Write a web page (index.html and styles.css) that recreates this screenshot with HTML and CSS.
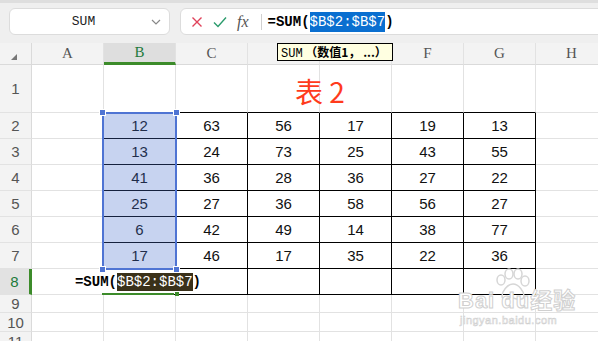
FILE: index.html
```html
<!DOCTYPE html>
<html lang="zh-CN">
<head>
    <meta charset="UTF-8">
    <title>SUM</title>
    <link rel="stylesheet" href="styles.css">
</head>
<body>

<div class="toolbar">
    <div class="namebox">
        <span class="name">SUM</span>
        <svg class="chev" width="10" height="6" viewBox="0 0 10 6"><path d="M1 1l4 4 4-4" fill="none" stroke="#888" stroke-width="1.2"/></svg>
    </div>
    <div class="fbar">
        <svg class="ico" width="12" height="12" viewBox="0 0 12 12"><path d="M1.5 1.5l9 9M10.5 1.5l-9 9" stroke="#e0425a" stroke-width="1.4"/></svg>
        <svg class="ico" width="14" height="12" viewBox="0 0 14 12"><path d="M1 6.5l4 4L13 1.5" fill="none" stroke="#2b9b6c" stroke-width="1.4"/></svg>
        <span class="fx">fx</span>
        <span class="sep"></span>
        <span class="ftext"><b>=SUM(</b><span class="hl">$B$2:$B$7</span><b>)</b></span>
    </div>
</div>

<div class="wrap">
    <div class="sheet">
        <div class="corner"><span class="tri"></span></div>
        <div class="ch">A</div><div class="ch on">B</div><div class="ch">C</div><div class="ch">D</div>
        <div class="ch">E</div><div class="ch">F</div><div class="ch">G</div><div class="ch">H</div>

        <div class="rh">1</div>
        <div class="c"></div><div class="c"></div><div class="c tb"></div><div class="c tb"></div>
        <div class="c tb"></div><div class="c tb"></div><div class="c tb"></div><div class="c"></div>

        <div class="rh">2</div>
        <div class="c"></div><div class="c t">12</div><div class="c t">63</div><div class="c t">56</div>
        <div class="c t">17</div><div class="c t">19</div><div class="c t">13</div><div class="c"></div>

        <div class="rh">3</div>
        <div class="c"></div><div class="c t">13</div><div class="c t">24</div><div class="c t">73</div>
        <div class="c t">25</div><div class="c t">43</div><div class="c t">55</div><div class="c"></div>

        <div class="rh">4</div>
        <div class="c"></div><div class="c t">41</div><div class="c t">36</div><div class="c t">28</div>
        <div class="c t">36</div><div class="c t">27</div><div class="c t">22</div><div class="c"></div>

        <div class="rh">5</div>
        <div class="c"></div><div class="c t">25</div><div class="c t">27</div><div class="c t">36</div>
        <div class="c t">58</div><div class="c t">56</div><div class="c t">27</div><div class="c"></div>

        <div class="rh">6</div>
        <div class="c"></div><div class="c t">6</div><div class="c t">42</div><div class="c t">49</div>
        <div class="c t">14</div><div class="c t">38</div><div class="c t">77</div><div class="c"></div>

        <div class="rh">7</div>
        <div class="c"></div><div class="c t">17</div><div class="c t">46</div><div class="c t">17</div>
        <div class="c t">35</div><div class="c t">22</div><div class="c t">36</div><div class="c"></div>

        <div class="rh on">8</div>
        <div class="c"></div><div class="c t"></div><div class="c t"></div><div class="c t"></div>
        <div class="c t"></div><div class="c t"></div><div class="c t"></div><div class="c"></div>

        <div class="rh">9</div>
        <div class="c"></div><div class="c"></div><div class="c"></div><div class="c"></div>
        <div class="c"></div><div class="c"></div><div class="c"></div><div class="c"></div>

        <div class="rh">10</div>
        <div class="c"></div><div class="c"></div><div class="c"></div><div class="c"></div>
        <div class="c"></div><div class="c"></div><div class="c"></div><div class="c"></div>

        <div class="rh">11</div>
        <div class="c"></div><div class="c"></div><div class="c"></div><div class="c"></div>
        <div class="c"></div><div class="c"></div><div class="c"></div><div class="c"></div>
    </div>

    <!-- overlay layer on the same grid template -->
    <div class="sheet layer">
        <div class="title">表 2</div>
        <div class="edit"><b>=SUM(</b><span class="ref">$B$2:$B$7</span><b>)</b></div>
        <div class="active"><span class="gh"></span></div>
        <div class="range">
            <span class="h tl"></span><span class="h tr"></span><span class="h bl"></span><span class="h br"></span>
        </div>
    </div>

    <div class="tip"><span class="fn">SUM</span> （数值1， ...）</div>
</div>

<div class="mark">
    <svg class="paw" width="40" height="34" viewBox="0 0 40 34">
        <g fill="none" stroke="#d6d6d6" stroke-width="1.5">
            <ellipse cx="9" cy="12" rx="4" ry="5"/>
            <ellipse cx="17" cy="6" rx="4" ry="5"/>
            <ellipse cx="26" cy="6" rx="4" ry="5"/>
            <ellipse cx="33" cy="13" rx="4" ry="5"/>
            <path d="M21 16c-6 0-11 8-11 12 0 4 5 4 11 2 6 2 11 2 11-2 0-4-5-12-11-12z"/>
        </g>
    </svg>
    <div class="brand">Bai<span class="du">du</span>经验</div>
    <div class="url">jingyan.baidu.com</div>
</div>

</body>
</html>
```

FILE: styles.css
```css
body {
    margin: 0;
    width: 598px;
    height: 341px;
    overflow: hidden;
    background: #fff;
    font-family: "Liberation Sans", Arial, sans-serif;
    position: relative;
}

.toolbar {
    height: 43px;
    background: #efefef;
    border-top: 3px solid #dedede;
    display: flex;
    padding: 5px 0 0 9px;
    box-sizing: border-box;
    gap: 10px;
}
.namebox, .fbar {
    height: 27px;
    background: #fff;
    border: 1px solid #dcdcdc;
    border-radius: 6px;
    box-sizing: border-box;
    display: flex;
    align-items: center;
}
.namebox {
    width: 161px;
    padding: 0 8px 0 0;
}
.namebox .name {
    flex: 1;
    text-align: center;
    font-family: "Liberation Mono", monospace;
    font-size: 13px;
    color: #222;
    padding-left: 6px;
}
.fbar {
    flex: 1;
    margin-right: -12px;
    padding-left: 10px;
}
.fbar .ico {
    margin-right: 10px;
}
.fbar .fx {
    font-family: "Liberation Serif", serif;
    font-style: italic;
    font-size: 16px;
    color: #555;
    margin-right: 12px;
}
.fbar .sep {
    width: 1px;
    height: 16px;
    background: #d0d0d0;
    margin-right: 6px;
}
.ftext, .edit {
    font-family: "Liberation Mono", monospace;
    font-size: 14px;
    color: #000;
    white-space: nowrap;
}
.ftext .hl {
    background: #0a6fd0;
    color: #fff;
    padding: 2px 0;
}

.wrap {
    position: relative;
}
.sheet {
    display: grid;
    grid-template-columns: 32px repeat(8, 72px);
    grid-template-rows: 22px 48px repeat(7, 26px) 18px 19px 19px;
}
.layer {
    position: absolute;
    left: 0;
    top: 0;
    right: 0;
    bottom: 0;
}
.corner, .ch, .rh {
    background: #f3f3f3;
    color: #555;
    font-size: 14px;
    display: flex;
    align-items: center;
    justify-content: center;
    box-sizing: border-box;
}
.corner {
    border-right: 1px solid #dadada;
    border-bottom: 1px solid #dadada;
}
.tri {
    width: 0;
    height: 0;
    border-left: 6px solid transparent;
    border-bottom: 6px solid #777;
    margin: 6px 0 0 -4px;
}
.ch {
    border-right: 1px solid #e2e2e2;
    border-bottom: 1px solid #dadada;
    font-family: "Liberation Serif", serif;
    font-size: 15px;
}
.ch.on {
    background: #dedede;
    color: #1d7a3c;
    border-bottom: 3px solid #3c8b2a;
}
.rh {
    border-right: 1px solid #dadada;
    border-bottom: 1px solid #e2e2e2;
    font-family: "Liberation Sans", sans-serif;
    font-size: 15px;
}
.rh.on {
    background: #e2e2e2;
    color: #1d7a3c;
    border-right: 3px solid #3c8b2a;
}

.c {
    border-right: 1px solid #e2e2e2;
    border-bottom: 1px solid #e2e2e2;
    box-sizing: border-box;
    display: flex;
    align-items: center;
    justify-content: center;
    font-size: 15px;
    color: #111;
}
.c.t {
    border-right-color: #000;
    border-bottom-color: #000;
}
.c.tb {
    border-bottom-color: #000;
}

.title {
    grid-row: 2;
    grid-column: 3 / span 6;
    display: flex;
    align-items: center;
    justify-content: center;
    padding-top: 4px;
    font-family: "Noto Sans CJK SC", sans-serif;
    font-size: 28px;
    color: #ff3b1c;
}

.range {
    grid-row: 3 / span 6;
    grid-column: 3;
    margin: -1px -1px -1px -2px;
    border: 2px solid #4f74d3;
    background: rgba(70, 110, 205, 0.3);
    position: relative;
}
.range .h {
    position: absolute;
    width: 5px;
    height: 5px;
    background: #4f74d3;
    border: 1px solid #fff;
}
.range .tl { left: -5px; top: -5px; }
.range .tr { right: -5px; top: -5px; }
.range .bl { left: -5px; bottom: -5px; }
.range .br { right: -5px; bottom: -5px; }

.edit {
    grid-row: 9;
    grid-column: 2 / span 3;
    margin: 0 1px 1px 0;
    background: #fff;
    display: flex;
    align-items: center;
    justify-content: center;
    padding-right: 3px;
}
.edit .ref {
    background: #3a311a;
    color: #fff;
    padding: 1px 0;
}
.active {
    grid-row: 9;
    grid-column: 3;
    align-self: end;
    height: 2px;
    margin-left: -2px;
    margin-right: 2px;
    background: #3c8b2a;
    position: relative;
}
.active .gh {
    position: absolute;
    right: -5px;
    top: -1px;
    width: 4px;
    height: 4px;
    background: #3c8b2a;
}

.tip {
    position: absolute;
    left: 277px;
    top: 0;
    width: 116px;
    height: 18px;
    box-sizing: border-box;
    background: #ffffe1;
    border: 1px solid #000;
    font-family: "Noto Sans CJK SC", sans-serif;
    font-size: 12px;
    font-weight: bold;
    line-height: 16px;
    padding-left: 3px;
    white-space: nowrap;
    overflow: hidden;
}
.tip .fn {
    font-family: "Liberation Mono", monospace;
    font-weight: normal;
}

.mark {
    position: absolute;
    left: 458px;
    top: 276px;
    width: 130px;
    white-space: nowrap;
}
.mark .paw {
    position: absolute;
    left: 34px;
    top: -8px;
}
.mark .brand {
    position: relative;
    margin-top: 12px;
    font-family: "Liberation Sans", "Noto Sans CJK SC", sans-serif;
    font-size: 22px;
    font-weight: bold;
    line-height: 26px;
    color: #fff;
    -webkit-text-stroke: 1px #d0d0d0;
    letter-spacing: 1px;
}
.mark .brand .du {
    margin-left: 6px;
}
.mark .url {
    font-size: 11px;
    color: #fff;
    -webkit-text-stroke: 0.6px #d0d0d0;
    letter-spacing: 0.5px;
    margin-left: 2px;
}
```
